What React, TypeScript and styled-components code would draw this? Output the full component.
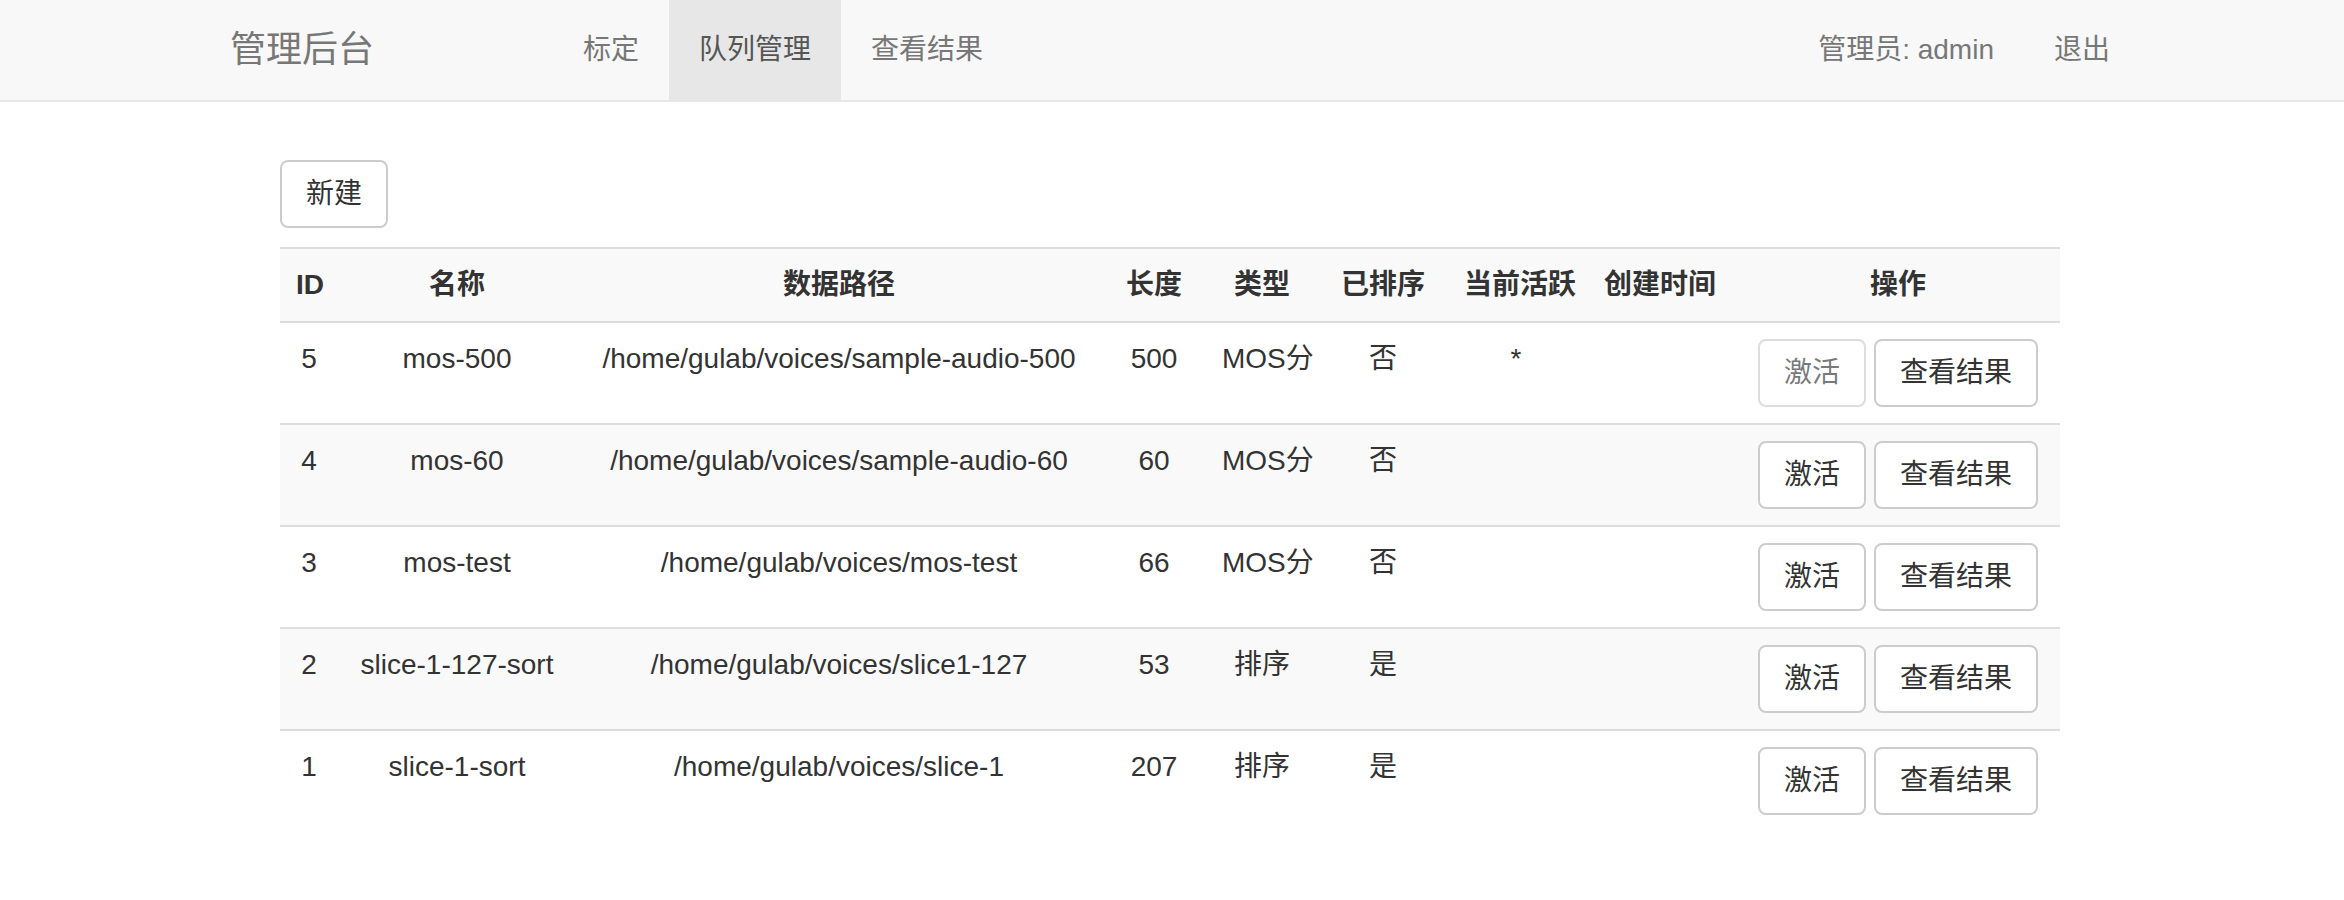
import React from "react";
import styled, { createGlobalStyle } from "styled-components";

const GlobalStyle = createGlobalStyle`
  html, body {
    margin: 0;
    padding: 0;
    background: #fff;
  }
  body {
    font-family: "Liberation Sans", "Noto Sans CJK SC", Arial, sans-serif;
    font-size: 28px;
    line-height: 40px;
    color: #333;
  }
`;

const Navbar = styled.header`
  background: #f8f8f8;
  border-bottom: 2px solid #e7e7e7;
  padding-right: 4px;
`;

const NavContainer = styled.div`
  width: 1940px;
  margin: 0 auto;
  display: flex;
  align-items: stretch;
  height: 100px;
`;

const Brand = styled.a`
  display: flex;
  align-items: center;
  padding: 0 30px;
  font-size: 36px;
  color: #777;
  text-decoration: none;
`;

const NavList = styled.nav<{ $right?: boolean }>`
  display: flex;
  margin-left: ${(p) => (p.$right ? "auto" : "149px")};
`;

const NavLink = styled.a<{ $active?: boolean }>`
  display: flex;
  align-items: center;
  padding: 0 30px;
  color: ${(p) => (p.$active ? "#555" : "#777")};
  background: ${(p) => (p.$active ? "#e7e7e7" : "transparent")};
  text-decoration: none;
  white-space: nowrap;
`;

const Main = styled.main`
  padding-right: 4px;
`;

const Content = styled.div`
  width: 1780px;
  margin: 58px auto 0;
`;

const Button = styled.button`
  font-family: inherit;
  font-size: 28px;
  line-height: 40px;
  padding: 12px 24px;
  color: #333;
  background: #fff;
  border: 2px solid #ccc;
  border-radius: 8px;
  cursor: pointer;
  white-space: nowrap;
  &:disabled {
    opacity: 0.65;
    cursor: not-allowed;
  }
`;

const Toolbar = styled.div`
  display: flex;
  margin-bottom: 19px;
`;

const Table = styled.table`
  width: 1780px;
  table-layout: fixed;
  border-collapse: separate;
  border-spacing: 0;
`;

const Row = styled.tr<{ $striped?: boolean }>`
  background: ${(p) => (p.$striped ? "#f9f9f9" : "#fff")};
`;

const HeadCell = styled.th`
  padding: 16px;
  border-top: 2px solid #ddd;
  border-bottom: 2px solid #ddd;
  text-align: center;
  font-weight: bold;
  vertical-align: top;
  white-space: nowrap;
`;

const Cell = styled.td<{ $last?: boolean }>`
  padding: 16px;
  border-bottom: ${(p) => (p.$last ? "none" : "2px solid #ddd")};
  text-align: center;
  vertical-align: top;
  white-space: nowrap;
`;

const Actions = styled.div`
  display: flex;
  justify-content: center;
  gap: 8px;
`;

const widths = [58, 238, 526, 104, 112, 130, 136, 152, 324];
const headers = ["ID", "名称", "数据路径", "长度", "类型", "已排序", "当前活跃", "创建时间", "操作"];

type Queue = {
  id: number;
  name: string;
  path: string;
  length: number;
  kind: string;
  sorted: string;
  active: boolean;
};

const queues: Queue[] = [
  { id: 5, name: "mos-500", path: "/home/gulab/voices/sample-audio-500", length: 500, kind: "MOS分", sorted: "否", active: true },
  { id: 4, name: "mos-60", path: "/home/gulab/voices/sample-audio-60", length: 60, kind: "MOS分", sorted: "否", active: false },
  { id: 3, name: "mos-test", path: "/home/gulab/voices/mos-test", length: 66, kind: "MOS分", sorted: "否", active: false },
  { id: 2, name: "slice-1-127-sort", path: "/home/gulab/voices/slice1-127", length: 53, kind: "排序", sorted: "是", active: false },
  { id: 1, name: "slice-1-sort", path: "/home/gulab/voices/slice-1", length: 207, kind: "排序", sorted: "是", active: false },
];

export default function App() {
  return (
    <>
      <GlobalStyle />
      <Navbar>
        <NavContainer>
          <Brand href="#">管理后台</Brand>
          <NavList>
            <NavLink href="#">标定</NavLink>
            <NavLink href="#" $active>
              队列管理
            </NavLink>
            <NavLink href="#">查看结果</NavLink>
          </NavList>
          <NavList $right>
            <NavLink href="#">管理员: admin</NavLink>
            <NavLink href="#">退出</NavLink>
          </NavList>
        </NavContainer>
      </Navbar>
      <Main>
        <Content>
          <Toolbar>
            <Button>新建</Button>
          </Toolbar>
          <Table>
            <colgroup>
              {widths.map((w, i) => (
                <col key={i} style={{ width: w }} />
              ))}
            </colgroup>
            <tbody>
              <Row $striped>
                {headers.map((h) => (
                  <HeadCell key={h}>{h}</HeadCell>
                ))}
              </Row>
              {queues.map((q, i) => {
                const last = i === queues.length - 1;
                return (
                  <Row key={q.id} $striped={i % 2 === 1}>
                    <Cell $last={last}>{q.id}</Cell>
                    <Cell $last={last}>{q.name}</Cell>
                    <Cell $last={last}>{q.path}</Cell>
                    <Cell $last={last}>{q.length}</Cell>
                    <Cell $last={last}>{q.kind}</Cell>
                    <Cell $last={last}>{q.sorted}</Cell>
                    <Cell $last={last}>{q.active ? "*" : ""}</Cell>
                    <Cell $last={last}></Cell>
                    <Cell $last={last}>
                      <Actions>
                        <Button disabled={q.active}>激活</Button>
                        <Button>查看结果</Button>
                      </Actions>
                    </Cell>
                  </Row>
                );
              })}
            </tbody>
          </Table>
        </Content>
      </Main>
    </>
  );
}
